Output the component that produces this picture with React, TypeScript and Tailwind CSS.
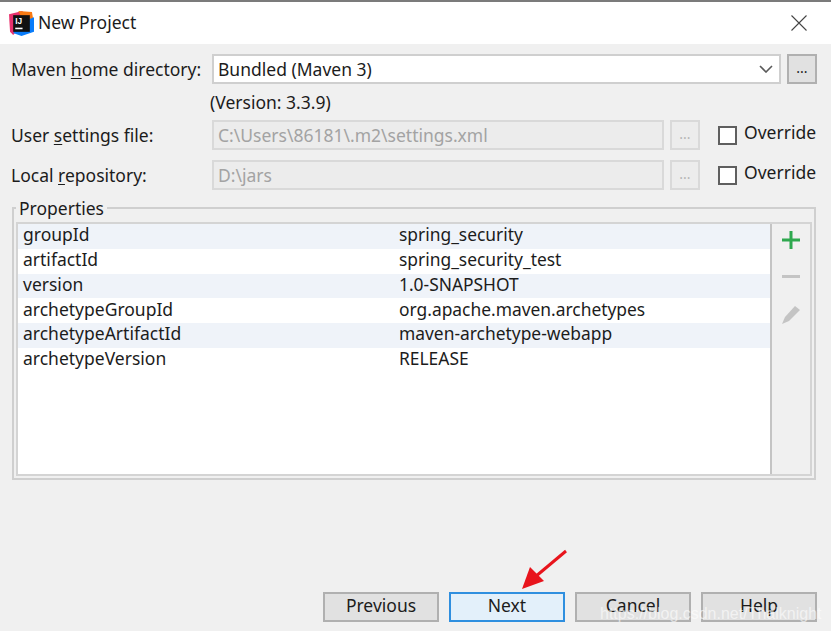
import { ReactNode } from 'react';

const FONT = "font-['Noto_Sans','Open_Sans',sans-serif]";

const properties = [
  ['groupId', 'spring_security'],
  ['artifactId', 'spring_security_test'],
  ['version', '1.0-SNAPSHOT'],
  ['archetypeGroupId', 'org.apache.maven.archetypes'],
  ['archetypeArtifactId', 'maven-archetype-webapp'],
  ['archetypeVersion', 'RELEASE'],
];

function AppIcon() {
  return (
    <svg width="25" height="25" viewBox="0 0 24 24" className="shrink-0">
      <path d="M0 3 L13 0 L14 12 L4 23 L1 20 Z" fill="#e8316d" />
      <path d="M9 0 L22 1 L24 12 L14 11 Z" fill="#f97a12" />
      <path d="M12 11 L24 6 L24 20 L12 24 L4 21 Z" fill="#087cfa" />
      <rect x="4" y="4" width="16" height="16" fill="#111" />
      <text x="6" y="12.5" fontSize="8" fontWeight="700" fill="#fff" fontFamily="Liberation Sans, sans-serif">IJ</text>
      <rect x="6" y="16" width="7" height="1.5" fill="#fff" />
    </svg>
  );
}

function Label({ children }: { children: ReactNode }) {
  return <div className="w-[212px] shrink-0 pl-[11px] text-[17.5px] text-[#1c1c1c]">{children}</div>;
}

function DisabledRow({ label, value }: { label: ReactNode; value: string }) {
  return (
    <div className="flex h-[30px] items-center">
      <Label>{label}</Label>
      <div className="flex h-[30px] w-[452px] items-center border-2 border-[#d9d9d9] bg-[#ececec] pl-[4px] text-[17.5px] text-[#a3a3a3]">
        {value}
      </div>
      <div className="ml-[6px] flex h-[30px] w-[30px] items-center justify-center border-2 border-[#d9d9d9] bg-[#ececec] pb-1 text-[14px] text-[#b5b5b5]">
        ...
      </div>
      <div className="ml-[18px] h-[19px] w-[19px] border-2 border-[#5f5f5f] bg-white" />
      <div className="-mt-[5px] ml-[7px] text-[17.5px] text-[#1c1c1c]">Override</div>
    </div>
  );
}

function FooterButton({ label, active }: { label: string; active?: boolean }) {
  return (
    <div
      className={
        active
          ? 'flex h-[30px] w-[116px] items-center justify-center border-2 border-[#2f8fdf] bg-[#e3f0fa] pb-[3px] text-[17.5px] text-[#1c1c1c]'
          : 'flex h-[30px] w-[116px] items-center justify-center border-2 border-[#b0b0b0] bg-[#e1e1e1] pb-[3px] text-[17.5px] text-[#1c1c1c]'
      }
    >
      {label}
    </div>
  );
}

export default function App() {
  return (
    <div className={`relative flex h-[631px] w-[831px] flex-col overflow-hidden bg-[#f0f0f0] ${FONT}`}>
      <div className="h-[2px] bg-[#7b7b7b]" />

      <div className="flex h-[42px] items-center bg-white pl-[9px] pr-[24px]">
        <AppIcon />
        <div className="mb-[2px] ml-[4px] text-[17.5px] text-[#1c1c1c]">New Project</div>
        <svg width="16" height="16" viewBox="0 0 16 16" className="ml-auto" stroke="#444" strokeWidth="1.1" fill="none">
          <path d="M0.5 0.5 L15.5 15.5 M15.5 0.5 L0.5 15.5" />
        </svg>
      </div>

      <div className="mt-[10px] flex h-[30px] items-center">
        <Label>
          Maven <span className="underline underline-offset-2">h</span>ome directory:
        </Label>
        <div className="flex h-[30px] w-[569px] items-center justify-between border-2 border-[#cfcfcf] bg-white pl-[4px] pr-[6px] text-[17.5px] text-[#1c1c1c]">
          Bundled (Maven 3)
          <svg width="14" height="8" viewBox="0 0 14 8" fill="none" stroke="#5a5a5a" strokeWidth="1.6">
            <path d="M1 1 L7 7 L13 1" />
          </svg>
        </div>
        <div className="ml-[6px] flex h-[30px] w-[30px] items-center justify-center border-2 border-[#b0b0b0] bg-[#e1e1e1] pb-1 text-[14px] text-[#1c1c1c]">
          ...
        </div>
      </div>

      <div className="mt-[6px] flex h-[30px] items-center pb-[6px] pl-[210px] text-[17.5px] text-[#1c1c1c]">(Version: 3.3.9)</div>

      <div className="flex flex-col gap-[10px]">
        <DisabledRow
          label={
            <>
              User <span className="underline underline-offset-2">s</span>ettings file:
            </>
          }
          value="C:\Users\86181\.m2\settings.xml"
        />
        <DisabledRow
          label={
            <>
              Local <span className="underline underline-offset-2">r</span>epository:
            </>
          }
          value="D:\jars"
        />
      </div>

      <div className="relative mx-[12px] mt-[17px] h-[273px] w-[804px] border-2 border-[#cfcfcf] pl-[2px] pr-[2px] pt-[13px]">
        <div className="absolute -top-[12px] left-[2px] bg-[#f0f0f0] px-[3px] text-[17.5px] leading-[22px] text-[#1c1c1c]">
          Properties
        </div>
        <div className="flex h-[254px] border-2 border-[#d4d4d4] bg-white">
          <div className="flex-1">
            {properties.map(([name, value], i) => (
              <div
                key={name}
                className={
                  i % 2 === 0
                    ? 'flex h-[24.75px] items-center bg-[#eff3f9] pb-[4px] pl-[5px] text-[17.5px] text-[#1c1c1c]'
                    : 'flex h-[24.75px] items-center bg-white pb-[4px] pl-[5px] text-[17.5px] text-[#1c1c1c]'
                }
              >
                <div className="w-[376px] shrink-0">{name}</div>
                <div className="text-[17.4px]">{value}</div>
              </div>
            ))}
          </div>
          <div className="flex w-[40px] flex-col items-center border-l-2 border-[#c4c4c4] bg-[#f0f0f0] pt-[7px]">
            <svg width="18" height="18" viewBox="0 0 18 18" fill="#2fa84f">
              <rect x="7.5" y="0" width="3" height="18" />
              <rect x="0" y="7.5" width="18" height="3" />
            </svg>
            <svg width="18" height="3" viewBox="0 0 18 3" fill="#c4c4c4" className="mt-[26px]">
              <rect width="18" height="3" />
            </svg>
            <svg width="18" height="18" viewBox="0 0 18 18" fill="#c4c4c4" className="mt-[28px]">
              <path d="M13 0 L18 4 L7 15 L0 18 L3 11 Z" />
            </svg>
          </div>
        </div>
      </div>

      <div className="mt-auto mb-[9px] flex justify-end gap-[10px] pr-[14px]">
        <FooterButton label="Previous" />
        <FooterButton label="Next" active />
        <FooterButton label="Cancel" />
        <FooterButton label="Help" />
      </div>

      <svg width="60" height="50" viewBox="0 0 60 50" className="absolute left-[518px] top-[545px]">
        <path d="M48 6 L17 32" stroke="#e8141c" strokeWidth="3" fill="none" />
        <path d="M4 44 L12 22 L26 36 Z" fill="#e8141c" />
      </svg>

      <div className="absolute left-[600px] top-[602px] font-['Liberation_Sans',sans-serif] text-[16px] text-white/60">
        https://blog.csdn.net/Thalknight
      </div>
    </div>
  );
}
